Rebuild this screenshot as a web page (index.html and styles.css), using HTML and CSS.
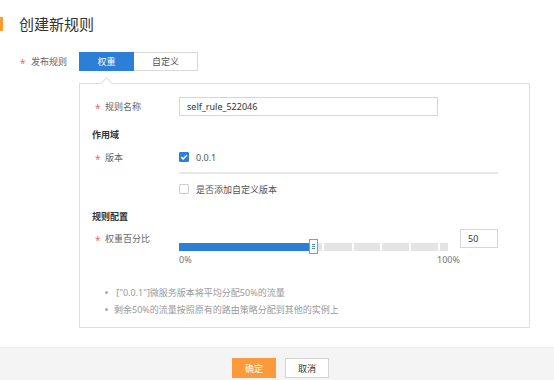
FILE: index.html
```html
<!DOCTYPE html>
<html lang="zh-CN">
<head>
  <meta charset="UTF-8" />
  <title>创建新规则</title>
  <link rel="stylesheet" href="styles.css">
</head>
<body>
  <div class="dialog-head">
    <h1 class="dialog-title">创建新规则</h1>
  </div>

  <div class="dialog-body">
    <div class="field">
      <label class="field-label"><span class="req">*</span>发布规则</label>
      <div class="seg">
        <button class="seg-btn seg-weight active">权重</button>
        <button class="seg-btn seg-custom">自定义</button>
      </div>
    </div>

    <div class="panel">
      <div class="row">
        <label class="row-label"><span class="req">*</span>规则名称</label>
        <input class="text-input" type="text" value="self_rule_522046" />
      </div>

      <div class="section">作用域</div>
      <div class="row row-check">
        <label class="row-label"><span class="req">*</span>版本</label>
        <label class="check">
          <span class="box checked">
            <svg width="10" height="10" viewBox="0 0 10 10"><path d="M2.3 5.1 L4.2 6.9 L7.8 3.2" fill="none" stroke="#fff" stroke-width="1.5"/></svg>
          </span>0.0.1
        </label>
      </div>
      <div class="divider"></div>
      <div class="row row-check row-extra">
        <span class="row-label"></span>
        <label class="check"><span class="box"></span>是否添加自定义版本</label>
      </div>

      <div class="section section-rule">规则配置</div>
      <div class="row row-weight">
        <label class="row-label"><span class="req">*</span>权重百分比</label>
        <div class="slider">
          <div class="track">
            <div class="fill"></div>
            <div class="handle"><i></i><i></i><i></i></div>
            <div class="seg-gray" style="width:4px"></div>
            <div class="seg-gray" style="width:28px"></div>
            <div class="seg-gray" style="width:26px"></div>
            <div class="seg-gray" style="width:27px"></div>
            <div class="seg-gray" style="width:27px"></div>
            <div class="seg-gray" style="width:8px"></div>
          </div>
          <div class="scale"><span>0%</span><span>100%</span></div>
        </div>
        <input class="num-input" type="text" value="50" />
      </div>

      <ul class="notes">
        <li>&nbsp;["0.0.1"]微服务版本将平均分配50%的流量</li>
        <li>剩余50%的流量按照原有的路由策略分配到其他的实例上</li>
      </ul>
    </div>
  </div>

  <div class="dialog-foot">
    <button class="btn btn-ok">确定</button>
    <button class="btn btn-cancel">取消</button>
  </div>
</body>
</html>
```

FILE: styles.css
```css
* {
  box-sizing: border-box;
}
body {
  margin: 0;
  background: #fff;
  font-family: "Noto Sans", "Noto Sans CJK SC", sans-serif;
  font-size: 9px;
  color: #666;
}

/* header */
.dialog-head {
  height: 48px;
  display: flex;
  align-items: center;
}
.dialog-head::before {
  content: "";
  width: 3px;
  height: 14px;
  background: #ff9a2e;
  margin-right: 16px;
}
.dialog-title {
  margin: 0;
  font-size: 15px;
  font-weight: normal;
  color: #333;
  line-height: 1;
}

.dialog-body {
  padding: 4px 24px 0 20px;
}

.req {
  display: inline-block;
  color: #ef6b6b;
  font-size: 10px;
  line-height: 1;
  padding-top: 3px;
}

/* top field */
.field {
  display: flex;
  align-items: center;
  height: 19px;
}
.field-label {
  width: 59px;
  display: flex;
  align-items: center;
}
.field-label .req {
  width: 11px;
}
.seg {
  display: flex;
}
.seg-btn {
  height: 19px;
  border: 1px solid #d9d9d9;
  background: #fff;
  color: #555;
  font: inherit;
  padding: 0;
}
.seg-weight {
  width: 55px;
}
.seg-custom {
  width: 64px;
  border-left: none;
}
.seg-btn.active {
  background: #2b7fd7;
  border-color: #2b7fd7;
  color: #fff;
}

/* panel */
.panel {
  position: relative;
  margin: 12px 0 0 59px;
  border: 1px solid #dedede;
  padding: 13px 12px 9px;
}
.panel::before,
.panel::after {
  content: "";
  position: absolute;
  top: -5px;
  left: 22px;
  width: 8px;
  height: 8px;
  transform: rotate(45deg);
  background: #fff;
}
.panel::before {
  top: -5px;
  border-left: 1px solid #dedede;
  border-top: 1px solid #dedede;
}
.panel::after {
  display: none;
}

.row {
  display: flex;
  align-items: center;
}
.row-label {
  width: 87px;
  flex-shrink: 0;
  padding-left: 3px;
  display: flex;
  align-items: center;
  line-height: 19px;
}
.row-label .req {
  width: 10px;
}
.text-input,
.num-input {
  height: 19px;
  border: 1px solid #d6d6d6;
  padding: 0 0 0 7px;
  font: inherit;
  color: #333;
  outline: none;
}
.text-input {
  width: 259px;
}
.num-input {
  width: 38px;
}

.section {
  margin-top: 12px;
  line-height: 14px;
  color: #333;
  font-weight: bold;
}
.section-rule {
  margin-top: 14px;
}

.row-check {
  margin-top: 8px;
  height: 14px;
}
.row-extra {
  margin-top: 8px;
}
.check {
  display: flex;
  align-items: center;
  color: #555;
}
.box {
  width: 10px;
  height: 10px;
  border: 1px solid #cfcfcf;
  border-radius: 1px;
  margin-right: 7px;
  background: #fff;
  display: flex;
}
.box.checked {
  background: #2b7fd7;
  border-color: #2b7fd7;
}
.box svg {
  margin: -1px;
}
.divider {
  margin: 8px 0 0 87px;
  width: 319px;
  height: 2px;
  background: #e8e8e8;
}

/* weight slider */
.row-weight {
  margin-top: 5px;
  align-items: flex-start;
}
.slider {
  width: 281px;
  padding-top: 10px;
}
.track {
  display: flex;
  align-items: center;
  height: 15px;
  gap: 2px;
  width: 269px;
}
.fill {
  width: 130px;
  height: 8px;
  background: #2b7fd7;
  margin-right: -2px;
}
.handle {
  width: 9px;
  height: 15px;
  border: 1px solid #6f9de6;
  background: #fff;
  margin-right: -2px;
  display: flex;
  flex-direction: column;
  align-items: center;
  justify-content: center;
  gap: 1px;
}
.handle i {
  width: 3px;
  height: 1px;
  background: #4c86dc;
}
.seg-gray {
  height: 8px;
  background: #e4e4e4;
}
.scale {
  display: flex;
  justify-content: space-between;
  line-height: 12px;
  color: #777;
}

/* notes */
.notes {
  list-style: none;
  margin: 18px 0 0;
  padding: 0 0 0 13px;
  color: #999;
}
.notes li {
  display: flex;
  align-items: center;
  line-height: 17px;
}
.notes li::before {
  content: "";
  width: 3px;
  height: 3px;
  border-radius: 50%;
  background: #aaa;
  margin-right: 6px;
}

/* footer */
.dialog-foot {
  margin-top: 19px;
  height: 33px;
  background: #f4f4f4;
  border-top: 1px solid #ededed;
  display: flex;
  justify-content: center;
  gap: 9px;
  padding: 10px 0 0 7px;
}
.btn {
  width: 44px;
  height: 20px;
  font: inherit;
  padding: 0;
  border: 1px solid #d4d4d4;
  background: #fff;
  color: #333;
}
.btn-ok {
  background: #fb9a3c;
  border-color: #fb9a3c;
  color: #fff;
}
```
